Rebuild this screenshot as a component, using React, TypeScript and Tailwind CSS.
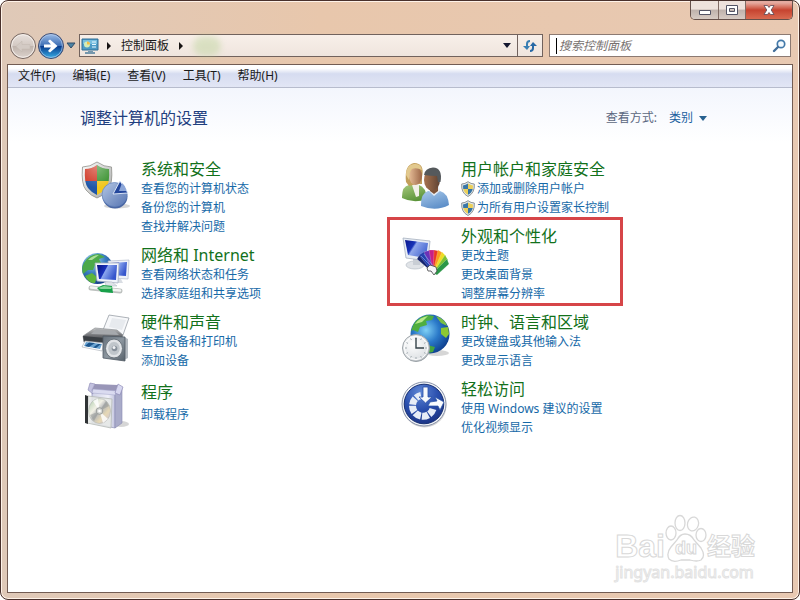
import { ReactNode } from "react";

type CategoryLink = { text: string; shield?: boolean };

type Category = {
  title: string;
  icon: ReactNode;
  links: CategoryLink[];
  highlighted?: boolean;
  spaced?: boolean;
};

const SecurityIcon = () => (
  <svg viewBox="0 0 50 50" className="size-[50px]">
    <defs>
      <clipPath id="sec-shield">
        <path d="M16 5Q11 9 4 9Q3 23 7 28Q11 33 16 35Q21 33 25 28Q29 23 28 9Q21 9 16 5Z" />
      </clipPath>
      <linearGradient id="sec-rim" x1="0" y1="0" x2="1" y2="1">
        <stop offset="0" stopColor="#fff" />
        <stop offset="1" stopColor="#a3a5a3" />
      </linearGradient>
      <linearGradient id="sec-pie" x1="0" y1="0" x2="1" y2="1">
        <stop offset="0" stopColor="#b4c7e4" />
        <stop offset="1" stopColor="#5674b2" />
      </linearGradient>
      <radialGradient id="sec-gloss" cx="0.5" cy="0.1" r="0.6">
        <stop offset="0" stopColor="#fff" stopOpacity="0.4" />
        <stop offset="1" stopColor="#fff" stopOpacity="0" />
      </radialGradient>
    </defs>
    <path d="M16 2Q9 7 1.5 7Q0 24 5 30Q10 36 16 38Q22 36 27 30Q32 24 30.5 7Q23 7 16 2Z" fill="url(#sec-rim)" stroke="#8f8f8a" strokeWidth="0.8" />
    <g clipPath="url(#sec-shield)">
      <path d="M0 0H16V21H0Z" fill="#d13a27" />
      <path d="M16 0H32V21H16Z" fill="#3a9230" />
      <path d="M0 21H16V40H0Z" fill="#1f57a8" />
      <path d="M16 21H32V40H16Z" fill="#f1c71e" />
      <path d="M0 0H32V40H0Z" fill="url(#sec-gloss)" />
    </g>
    <ellipse cx="36" cy="46" rx="13" ry="2.5" fill="#777" opacity="0.3" />
    <ellipse cx="34" cy="36.5" rx="12.5" ry="12" fill="#4a67a4" />
    <ellipse cx="33.5" cy="34.5" rx="12.5" ry="12" fill="url(#sec-pie)" stroke="#6484bb" strokeWidth="0.7" />
    <path d="M32 34L39 21L47 33Z" fill="#24479c" stroke="#e4edfa" strokeWidth="0.9" />
    <path d="M38 31L41 23Q45 26 45 31Z" fill="#8ca6d8" />
  </svg>
);

const NetworkIcon = () => (
  <svg viewBox="0 0 50 50" className="size-[50px]">
    <defs>
      <radialGradient id="net-globe" cx="0.35" cy="0.25" r="0.8">
        <stop offset="0" stopColor="#a9ddf3" />
        <stop offset="0.5" stopColor="#3a7ec0" />
        <stop offset="1" stopColor="#123b83" />
      </radialGradient>
      <linearGradient id="net-screen" x1="0" y1="0" x2="1" y2="0.4">
        <stop offset="0" stopColor="#08127c" />
        <stop offset="0.45" stopColor="#1a33bd" />
        <stop offset="0.5" stopColor="#8ba6ee" />
        <stop offset="1" stopColor="#3656cc" />
      </linearGradient>
    </defs>
    <circle cx="16.5" cy="22.5" r="15.5" fill="url(#net-globe)" />
    <path d="M3 17Q8 8 18 8L24 11L18 13L20 17L14 19L12 24L7 24L2 28Q0 22 3 17Z" fill="#4ca94a" />
    <path d="M4 30L11 27L16 31L14 37Q8 38 4 30Z" fill="#5eb53c" />
    <path d="M7 14Q12 9 18 9L11 14Z" fill="#c6ecac" opacity="0.8" />
    <path d="M27 15L48 14L47 33L30 32Z" fill="#eef1f8" stroke="#b3bccb" strokeWidth="0.7" />
    <path d="M29 17L46 16L45 30L30 29Z" fill="url(#net-screen)" />
    <path d="M34 33H40L42 37H35Z" fill="#d9dde3" />
    <path d="M14 17L38 17L37 37L16 35Z" fill="#f2f5fb" stroke="#a6b0c2" strokeWidth="0.8" />
    <path d="M16 19L36 19L35 34L18 33Z" fill="url(#net-screen)" />
    <path d="M24 36H31L36 40H25Z" fill="#dfe3e9" stroke="#aab2bf" strokeWidth="0.5" />
    <path d="M10 42L39 45" stroke="#bdc1bf" strokeWidth="5" strokeLinecap="round" />
    <path d="M10 41.5L39 44.5" stroke="#f3f5f3" strokeWidth="2.5" strokeLinecap="round" />
    <path d="M16 42L22 39L31 40L32 47L20 46Z" fill="#18a04a" />
    <path d="M17 42L23 40L31 41L30 43L20 43Z" fill="#86d79b" />
  </svg>
);

const HardwareIcon = () => (
  <svg viewBox="0 0 50 50" className="size-[50px]">
    <defs>
      <linearGradient id="hw-body" x1="0" y1="0" x2="0" y2="1">
        <stop offset="0" stopColor="#c9c9c9" />
        <stop offset="0.5" stopColor="#74767a" />
        <stop offset="1" stopColor="#3d4044" />
      </linearGradient>
      <linearGradient id="hw-speaker" x1="0" y1="0" x2="1" y2="1">
        <stop offset="0" stopColor="#66707a" />
        <stop offset="0.5" stopColor="#8c969f" />
        <stop offset="1" stopColor="#57616a" />
      </linearGradient>
    </defs>
    <path d="M28 2L48 5L42 22L22 17Z" fill="#f7f8fa" stroke="#999fa7" strokeWidth="0.8" />
    <path d="M31 5L45 7L41 17L28 14Z" fill="#e7eaee" />
    <path d="M14 15L36 17L42 22L40 29L3 29L2 23Z" fill="url(#hw-body)" stroke="#8c9095" strokeWidth="0.7" />
    <path d="M15 16L34 18L38 22L10 21Z" fill="#a6a9ad" />
    <path d="M2 23L24 25L23 31L3 29Z" fill="#3a3f44" />
    <path d="M4 28L23 30L21 38L1 34Z" fill="#fff" stroke="#a5abb3" strokeWidth="0.6" />
    <path d="M5 29L21 31L19 36L3 33Z" fill="#6ba4d2" />
    <path d="M8 29.5L14 30L8 34L4 33ZM17 31L20 31L15 35L12 34.5Z" fill="#1c568d" />
    <path d="M43 24L47 26L47 45L43 47Z" fill="#b4bac0" />
    <path d="M22 23L44 24L44 48L22 45Z" fill="url(#hw-speaker)" stroke="#515b65" strokeWidth="0.8" />
    <ellipse cx="33" cy="35.5" rx="8.5" ry="9.5" fill="#dfe2e5" stroke="#6c757d" />
    <ellipse cx="33" cy="35.5" rx="6.2" ry="7" fill="#c0c6cb" stroke="#eef0f2" strokeWidth="0.6" />
    <circle cx="33.5" cy="35.5" r="2.8" fill="#87909a" />
    <circle cx="33" cy="34.5" r="1.5" fill="#f1f3f5" />
  </svg>
);

const ProgramsIcon = () => (
  <svg viewBox="0 0 50 50" className="size-[50px]">
    <defs>
      <linearGradient id="pr-box" x1="0" y1="0" x2="1" y2="0">
        <stop offset="0" stopColor="#cfd1e6" />
        <stop offset="0.7" stopColor="#eff0f9" />
        <stop offset="1" stopColor="#c2c4de" />
      </linearGradient>
      <linearGradient id="pr-disc" x1="0" y1="0" x2="1" y2="1">
        <stop offset="0" stopColor="#a9cba9" />
        <stop offset="0.35" stopColor="#f2f1e6" />
        <stop offset="0.5" stopColor="#b6b8ba" />
        <stop offset="0.7" stopColor="#e6d8b5" />
        <stop offset="1" stopColor="#c7c0dc" />
      </linearGradient>
    </defs>
    <ellipse cx="40" cy="44" rx="8" ry="3" fill="#777" opacity="0.3" />
    <path d="M11 10L34 11L34 48L11 43Z" fill="url(#pr-box)" stroke="#9a9cbf" strokeWidth="0.8" />
    <path d="M34 11L41 7L41 43L34 48Z" fill="#a9abc9" stroke="#8a8cb2" strokeWidth="0.6" />
    <path d="M14 4L37 5L34 12L11 10Z" fill="#9996b8" />
    <path d="M14 4L9 3L7 10L12 14L11 10Z" fill="#c3c2e0" stroke="#8683b0" strokeWidth="0.6" />
    <path d="M12 9L36 11L34 15L11 13Z" fill="#dadbf0" stroke="#a3a4c9" strokeWidth="0.5" />
    <path d="M37 4L42 7L39 15L34 13Z" fill="#d6d6ef" stroke="#8683b0" strokeWidth="0.6" />
    <path d="M7 16L31 19L30 48L6 43Z" fill="#e5e8e5" fillOpacity="0.85" stroke="#b4b9b5" strokeWidth="0.8" />
    <path d="M4 15L7 16L7 44L4 43Z" fill="#303335" />
    <ellipse cx="18.5" cy="31" rx="11" ry="12.5" fill="url(#pr-disc)" stroke="#b2b5b1" strokeWidth="0.6" />
    <path d="M18.5 31L12 21L17 18.5ZM18.5 31L27 39L22 43Z" fill="#fff" opacity="0.8" />
    <path d="M18.5 31L25 21L28 26ZM18.5 31L9 35L13 41Z" fill="#8a8e8c" opacity="0.45" />
    <circle cx="18.5" cy="31" r="3.3" fill="#d6d8d5" stroke="#9b9f9d" />
    <circle cx="18.5" cy="31" r="1.3" fill="#fff" />
  </svg>
);

const UsersIcon = () => (
  <svg viewBox="0 0 50 50" className="size-[50px]">
    <defs>
      <linearGradient id="us-green" x1="0" y1="0" x2="0.5" y2="1">
        <stop offset="0" stopColor="#a8c97d" />
        <stop offset="1" stopColor="#5b943a" />
      </linearGradient>
      <linearGradient id="us-blue" x1="0" y1="0" x2="0.5" y2="1">
        <stop offset="0" stopColor="#a9c9ea" />
        <stop offset="1" stopColor="#5f90c9" />
      </linearGradient>
      <linearGradient id="us-tan" x1="0" y1="0" x2="1" y2="0">
        <stop offset="0" stopColor="#e5bc96" />
        <stop offset="1" stopColor="#9c6647" />
      </linearGradient>
      <linearGradient id="us-brown" x1="0" y1="0" x2="1" y2="0">
        <stop offset="0" stopColor="#a8734f" />
        <stop offset="1" stopColor="#5e4233" />
      </linearGradient>
    </defs>
    <path d="M1 37Q1 26 8 25L18 25Q25 27 26 39Q13 44 1 38Z" fill="url(#us-green)" />
    <path d="M11 25L15 37L18 36L18 22H11Z" fill="#f1efe9" />
    <path d="M5 22Q3 5 13 3Q24 3 21 17V24H16L8 26Z" fill="#c39f5b" />
    <ellipse cx="14.5" cy="16" rx="6.5" ry="9" fill="url(#us-tan)" />
    <path d="M5 15Q5 5 13 4Q20 3 21 10Q15 7 11 9Q8 12 8 20Z" fill="#e2c98e" />
    <path d="M20 45Q20 33 27 31H39Q47 33 48 45Q35 52 20 46Z" fill="url(#us-blue)" />
    <path d="M28 31L33 36L39 31L38 26H29Z" fill="#e9eef4" />
    <path d="M29 25H37V31L33 34L29 31Z" fill="#7d5339" />
    <ellipse cx="31" cy="20" rx="8" ry="10.5" fill="url(#us-brown)" />
    <path d="M23 15Q24 8 32 7.5Q42 8 39.5 22L37 22L36 16Q30 16 23 15Z" fill="#55595c" />
  </svg>
);

const AppearanceIcon = () => (
  <svg viewBox="0 0 50 50" className="size-[50px]">
    <defs>
      <linearGradient id="ap-screen" x1="0" y1="0" x2="1" y2="0.5">
        <stop offset="0" stopColor="#0c168c" />
        <stop offset="0.4" stopColor="#1733b8" />
        <stop offset="0.48" stopColor="#8fa6ea" />
        <stop offset="1" stopColor="#4a6bd4" />
      </linearGradient>
    </defs>
    <ellipse cx="14" cy="38" rx="9" ry="4" fill="#e0e3e7" stroke="#b6bdc5" strokeWidth="0.7" />
    <path d="M12 30H19V38H12Z" fill="#c9ced5" />
    <path d="M2 11L29 14L27 34L5 31Z" fill="#e8edf5" stroke="#a7b1bf" strokeWidth="0.8" />
    <path d="M4 13L27 16L25 31L7 28Z" fill="url(#ap-screen)" />
    <g stroke="#fff" strokeWidth="0.2">
      <path d="M32 46L16 32L19 27L34 42Z" fill="#152470" />
      <path d="M32 46L18 28L24 24L35 42Z" fill="#2440ae" />
      <path d="M32 46L23 25L29 23L36 43Z" fill="#6a32b8" />
      <path d="M32 46L28 23L34 23L36 43Z" fill="#c81f86" />
      <path d="M32 46L33 23L38 24L36 43Z" fill="#ea3524" />
      <path d="M32 46L37 23L42 26L37 44Z" fill="#fa9c1b" />
      <path d="M32 46L41 25L45 29L38 45Z" fill="#eedd22" />
      <path d="M32 46L44 28L47 33L37 46Z" fill="#7cc232" />
      <path d="M32 46L46 32L48 37L36 48Z" fill="#2b9748" />
    </g>
    <path d="M20 29L32 41M23 27L33 40" stroke="#7fa2e6" strokeWidth="0.7" />
    <path d="M26 41L29 38L35 40L36 44L33 48L30 44L27 44Z" fill="#f6f6f8" stroke="#444" strokeWidth="0.8" />
  </svg>
);

const ClockIcon = () => (
  <svg viewBox="0 0 50 50" className="size-[50px]">
    <defs>
      <radialGradient id="ck-globe" cx="0.4" cy="0.4" r="0.65">
        <stop offset="0" stopColor="#7fd0f5" />
        <stop offset="0.5" stopColor="#2b7ac9" />
        <stop offset="1" stopColor="#0d3d8c" />
      </radialGradient>
      <radialGradient id="ck-face" cx="0.4" cy="0.35" r="0.7">
        <stop offset="0" stopColor="#fff" />
        <stop offset="0.8" stopColor="#e0e3e6" />
        <stop offset="1" stopColor="#aab0b5" />
      </radialGradient>
    </defs>
    <ellipse cx="36" cy="40" rx="12" ry="3" fill="#777" opacity="0.3" />
    <circle cx="29" cy="21" r="19.5" fill="url(#ck-globe)" />
    <path d="M10 18Q13 5 26 2L33 3L31 7L25 8L26 12L19 14L17 19L12 17Z" fill="#4fae3f" />
    <path d="M35 3Q44 6 46 13L40 10L37 6Z" fill="#79c043" />
    <path d="M40 15L47 14L48 21L45 25L40 21Z" fill="#8cc832" />
    <path d="M26 32L34 34L32 39L27 40Z" fill="#45a43e" />
    <path d="M14 11Q19 4 27 3L21 9Z" fill="#b9e98a" />
    <circle cx="15" cy="35" r="13.5" fill="url(#ck-face)" stroke="#9ba2a7" />
    <circle cx="15" cy="35" r="11.5" fill="none" stroke="#fff" />
    <path d="M15 24V26M15 44V46M4 35H6M24 35H26M9.5 25.5L10.5 27M20.5 25.5L19.5 27M9.5 44.5L10.5 43M20.5 44.5L19.5 43M5.5 29.5L7 30.5M24.5 29.5L23 30.5M5.5 40.5L7 39.5M24.5 40.5L23 39.5" stroke="#a3acb1" />
    <path d="M15 25V35H23" fill="none" stroke="#36434a" strokeWidth="1.4" />
  </svg>
);

const EaseIcon = () => (
  <svg viewBox="0 0 50 50" className="size-[50px]">
    <defs>
      <radialGradient id="es-disc" cx="0.4" cy="0.2" r="0.9">
        <stop offset="0" stopColor="#5f86d4" />
        <stop offset="0.5" stopColor="#2a4fae" />
        <stop offset="1" stopColor="#172d7c" />
      </radialGradient>
    </defs>
    <circle cx="23.5" cy="25.5" r="22" fill="#999" opacity="0.4" />
    <circle cx="23" cy="24" r="22" fill="#f3f5f8" stroke="#8690a8" />
    <circle cx="23" cy="24" r="19.8" fill="url(#es-disc)" stroke="#152e72" />
    <path d="M32 29A10.5 10.5 0 1 1 20 15.5" fill="none" stroke="#e6ecf7" strokeWidth="7" strokeDasharray="6.5 1.2" />
    <path d="M22 7H27V17H31L24.5 23L18 17H22Z" fill="#f7f9fc" stroke="#2a50aa" strokeWidth="0.8" />
    <path d="M27 26L29 22L36 21L34 17L43 22L39 30L37 26Z" fill="#fafcff" stroke="#2751a4" strokeWidth="0.7" />
  </svg>
);

const ShieldIcon = () => (
  <svg viewBox="0 0 16 16" className="size-4 shrink-0" aria-hidden="true">
    <path d="M7 0.7Q4 3 0.7 3Q0 12 7 15.5Q14 12 13.3 3Q10 3 7 0.7Z" fill="#e3e8ea" stroke="#81888b" strokeWidth="0.9" />
    <path d="M7 2.5Q4.5 4.3 2 4.4L2.2 8H7Z" fill="#3977a8" />
    <path d="M7 2.5Q9.5 4.3 12 4.4L11.8 8H7Z" fill="#ecd05a" />
    <path d="M2.2 8H7V13.8Q3.2 12 2.2 8Z" fill="#ecd05a" />
    <path d="M7 8H11.8Q10.8 12 7 13.8Z" fill="#3573a4" />
  </svg>
);

const leftColumn: Category[] = [
  {
    title: "系统和安全",
    icon: <SecurityIcon />,
    links: [{ text: "查看您的计算机状态" }, { text: "备份您的计算机" }, { text: "查找并解决问题" }],
  },
  {
    title: "网络和 Internet",
    icon: <NetworkIcon />,
    links: [{ text: "查看网络状态和任务" }, { text: "选择家庭组和共享选项" }],
  },
  {
    title: "硬件和声音",
    icon: <HardwareIcon />,
    links: [{ text: "查看设备和打印机" }, { text: "添加设备" }],
  },
  { title: "程序", icon: <ProgramsIcon />, links: [{ text: "卸载程序" }], spaced: true },
];

const rightColumn: Category[] = [
  {
    title: "用户帐户和家庭安全",
    icon: <UsersIcon />,
    links: [
      { text: "添加或删除用户帐户", shield: true },
      { text: "为所有用户设置家长控制", shield: true },
    ],
  },
  {
    title: "外观和个性化",
    icon: <AppearanceIcon />,
    links: [{ text: "更改主题" }, { text: "更改桌面背景" }, { text: "调整屏幕分辨率" }],
    highlighted: true,
  },
  {
    title: "时钟、语言和区域",
    icon: <ClockIcon />,
    links: [{ text: "更改键盘或其他输入法" }, { text: "更改显示语言" }],
  },
  {
    title: "轻松访问",
    icon: <EaseIcon />,
    links: [{ text: "使用 Windows 建议的设置" }, { text: "优化视频显示" }],
  },
];

const menus = ["文件(F)", "编辑(E)", "查看(V)", "工具(T)", "帮助(H)"];

function CategoryBlock({ category }: { category: Category }) {
  return (
    <section className="relative flex items-start">
      <div className="-mb-4 w-[60px] shrink-0">{category.icon}</div>
      <div className={category.spaced ? "flex flex-col gap-[3px] pt-[3px]" : "flex flex-col"}>
        <h2 className="text-base leading-[19px] text-[#12711b]">
          <a href="#">{category.title}</a>
        </h2>
        <ul>
          {category.links.map((link) => (
            <li key={link.text} className="h-[19px]">
              <a href="#" className="flex items-center text-xs leading-[19px] text-[#1669a8]">
                {link.shield && <ShieldIcon />}
                {link.text}
              </a>
            </li>
          ))}
        </ul>
      </div>
      {category.highlighted && (
        <div className="pointer-events-none absolute -top-2.5 -left-3.5 h-[89px] w-[236px] border-3 border-[#d64548]" />
      )}
    </section>
  );
}

function WindowButtons() {
  return (
    <div className="flex h-[19px] self-end overflow-hidden rounded-b-[5px] border border-t-0 border-[#65504a]">
      <button aria-label="最小化" className="flex w-7 items-center justify-center border-r border-[#806b64] bg-linear-to-b from-[#eee2dc] from-45% via-[#bfb2ac] via-50% to-[#d7cbc4]">
        <svg viewBox="0 0 14 12" className="h-3 w-3.5">
          <path d="M1.5 6.5H12.5V10.5H1.5Z" fill="#fff" stroke="#535465" />
        </svg>
      </button>
      <button aria-label="最大化" className="flex w-[27px] items-center justify-center border-r border-[#806b64] bg-linear-to-b from-[#eee2dc] from-45% via-[#bfb2ac] via-50% to-[#d7cbc4]">
        <svg viewBox="0 0 14 12" className="h-3 w-3.5">
          <path d="M1.5 1.5H12.5V10.5H1.5ZM4.5 4.5V7.5H9.5V4.5Z" fill="#fff" fillRule="evenodd" stroke="#535465" />
        </svg>
      </button>
      <button aria-label="关闭" className="flex w-[46px] items-center justify-center bg-linear-to-b from-[#e5aaa0] from-10% via-[#c64330] via-50% to-[#d96a50]">
        <svg viewBox="0 0 14 12" className="h-3 w-3.5">
          <path d="M2 1.5H5.5L7 3.5L8.5 1.5H12L9.2 6L12 10.5H8.5L7 8.5L5.5 10.5H2L4.8 6Z" fill="#fff" stroke="#5b4754" strokeWidth="0.8" />
        </svg>
      </button>
    </div>
  );
}

function NavButtons() {
  return (
    <div className="flex w-[72px] shrink-0 items-center">
      <button aria-label="后退" className="ml-0.5">
        <svg viewBox="0 0 28 28" className="size-7">
          <defs>
            <linearGradient id="nav-back" x1="0" y1="0" x2="0" y2="1">
              <stop offset="0" stopColor="#e9e2de" />
              <stop offset="0.48" stopColor="#d3c9c3" />
              <stop offset="0.52" stopColor="#c0b4ad" />
              <stop offset="1" stopColor="#ddd4ce" />
            </linearGradient>
          </defs>
          <circle cx="14" cy="14" r="12.5" fill="url(#nav-back)" stroke="#75655f" />
          <circle cx="14" cy="14" r="11.3" fill="none" stroke="#f5efeb" />
          <path d="M7 14.5L13 9V12.5H21V17H13V20Z" fill="#d3cac4" stroke="#c3b8b1" strokeWidth="0.5" />
        </svg>
      </button>
      <button aria-label="前进">
        <svg viewBox="0 0 28 28" className="size-7">
          <defs>
            <linearGradient id="nav-next" x1="0" y1="0" x2="0" y2="1">
              <stop offset="0" stopColor="#9fbee8" />
              <stop offset="0.48" stopColor="#3e6fb5" />
              <stop offset="0.52" stopColor="#0a3d8e" />
              <stop offset="1" stopColor="#39b1e8" />
            </linearGradient>
          </defs>
          <circle cx="14" cy="14" r="12.5" fill="url(#nav-next)" stroke="#3e4b70" />
          <circle cx="14" cy="14" r="11.4" fill="none" stroke="#b4cced" strokeWidth="0.7" />
          <path d="M7 12.5H14L11 9L13 7.5L20.5 14L13 20.5L11 19L14 15.5H7Z" fill="#fff" />
        </svg>
      </button>
      <button aria-label="最近浏览的位置" className="ml-px">
        <svg viewBox="0 0 10 7" className="h-[7px] w-2.5">
          <path d="M1 1H9L5 6Z" fill="#4a83a5" stroke="#334d67" />
        </svg>
      </button>
    </div>
  );
}

function AddressBar() {
  return (
    <div className="flex h-[23px] min-w-0 flex-1 items-center border border-[#71625d] bg-linear-to-b from-[#f8efe9] to-[#efe5de]">
      <svg viewBox="0 0 18 18" className="ml-px size-[18px] shrink-0">
        <path d="M1 2H17V13H1Z" fill="#4d9bc6" stroke="#336f95" />
        <path d="M2 3H16V7H2Z" fill="#77bedf" />
        <circle cx="6" cy="7.5" r="3" fill="#d2ecb9" />
        <path d="M6 7.5V4.5A3 3 0 0 1 9 7.5Z" fill="#f5bd43" />
        <path d="M11 5H15M11 7.5H15M11 10H15" stroke="#e6f8ff" />
        <path d="M7 14H12V15H14V17H4V15H7Z" fill="#7597ad" />
      </svg>
      <svg viewBox="0 0 4 8" className="ml-2 h-2 w-1">
        <path d="M0 0L4 4L0 8Z" fill="#171313" />
      </svg>
      <button className="ml-2.5 text-xs leading-5 text-[#171717]">控制面板</button>
      <svg viewBox="0 0 4 8" className="ml-2.5 h-2 w-1">
        <path d="M0 0L4 4L0 8Z" fill="#171313" />
      </svg>
      <span className="ml-2.5 h-5 w-7 rounded-full bg-[#b3d08f] opacity-40 blur-[3px]" />
      <button aria-label="上一个位置" className="ml-auto flex h-full w-5 items-center justify-center">
        <svg viewBox="0 0 8 5" className="h-[5px] w-2">
          <path d="M0 0H8L4 5Z" fill="#14162e" />
        </svg>
      </button>
      <button aria-label="刷新" className="flex h-full w-[25px] items-center justify-center border-l border-[#71625d]">
        <svg viewBox="0 0 16 16" className="size-4">
          <path d="M8 2Q4 2 4 6V8H1L5 12L8 8H6V6Q6 4 8 4Z" fill="#397eb3" />
          <path d="M8 14Q12 14 12 10V8H15L11 4L8 8H10V10Q10 12 8 12Z" fill="#2869a5" />
        </svg>
      </button>
    </div>
  );
}

function Watermark() {
  return (
    <div className="mt-auto mr-[37px] mb-2.5 self-end font-['Noto_Sans','Noto_Sans_CJK_SC',sans-serif] text-white" aria-hidden="true">
      <div className="flex h-12 items-end">
        <span className="font-['Liberation_Sans',sans-serif] text-[32px] leading-8 font-bold [-webkit-text-stroke:1px_#d8d8d8]">Bai</span>
        <div className="relative flex h-12 w-[42px] items-end justify-center">
          <svg viewBox="0 0 42 48" className="absolute inset-0 h-12 w-[42px]">
            <g fill="#fff" stroke="#d8d8d8" strokeWidth="1.3">
              <ellipse cx="6" cy="19" rx="5" ry="7" />
              <ellipse cx="15" cy="9" rx="5" ry="7.5" />
              <ellipse cx="28" cy="10" rx="5.5" ry="7" transform="rotate(15 28 10)" />
              <ellipse cx="36" cy="21" rx="5" ry="6.5" />
              <path d="M20 20Q26 20 29 26L36 34Q41 42 36 46Q32 48 25 46H16Q8 49 4 45Q1 39 6 33L12 26Q15 20 20 20Z" />
            </g>
          </svg>
          <span className="relative mb-1 font-['Liberation_Sans',sans-serif] text-lg leading-5 font-bold [-webkit-text-stroke:1px_#d8d8d8]">du</span>
        </div>
        <span className="text-2xl leading-8 font-bold [-webkit-text-stroke:1px_#d8d8d8]">经验</span>
      </div>
      <div className="text-base leading-5 [-webkit-text-stroke:1px_#e2e2e2]">jingyan.baidu.com</div>
    </div>
  );
}

export default function App() {
  return (
    <div className="flex min-h-screen flex-col rounded-lg border border-[#49312c] bg-linear-to-r from-[#dfc9b8] via-[#e8c7ac] via-40% to-[#e8c9b2] px-1.5 pb-1.5 font-['Noto_Sans','Noto_Sans_CJK_SC',sans-serif] text-[#1a1a1a] shadow-[inset_0_0_0_1px_#fff3e9]">
      <WindowButtons />
      <header className="flex items-center pt-3.5 pb-[7px]">
        <div className="-my-1 flex min-w-0 flex-1 items-center">
          <NavButtons />
          <AddressBar />
        </div>
        <label className="mr-0.5 ml-1.5 flex h-[23px] w-[242px] items-center border border-[#8c7a72] bg-white pr-1">
          <span className="ml-1.5 h-4 w-px bg-black" />
          <input
            type="text"
            aria-label="搜索控制面板"
            placeholder="搜索控制面板"
            className="ml-0.5 min-w-0 flex-1 text-xs italic outline-none placeholder:text-[#77716f]"
          />
          <svg viewBox="0 0 14 14" className="size-3.5">
            <circle cx="9" cy="5" r="3.7" fill="#f4faff" stroke="#4379a9" strokeWidth="1.7" />
            <path d="M6 8L2 12" stroke="#426e99" strokeWidth="2.4" strokeLinecap="round" />
          </svg>
        </label>
      </header>
      <div className="flex flex-1 flex-col border border-[#725c53] bg-white">
        <nav className="flex h-[23px] items-center gap-[17px] border-b border-[#b7bccd] bg-linear-to-b from-white from-15% via-[#d6dcf0] via-40% to-[#e2e6f5] px-2.5">
          {menus.map((menu) => (
            <button key={menu} className="text-xs leading-5">
              {menu}
            </button>
          ))}
        </nav>
        <main className="flex flex-1 flex-col bg-[linear-gradient(to_bottom,#f3f6fd,#ffffff_55px)]">
          <div className="flex items-center justify-between pt-[18px] pr-[85px] pl-[72px]">
            <h1 className="text-base leading-6 text-[#1f3f7f]">调整计算机的设置</h1>
            <div className="flex items-center gap-3 text-xs leading-5">
              <span className="text-[#5b6780]">查看方式:</span>
              <button className="flex items-center gap-1.5 text-[#1b5f9f]">
                类别
                <svg viewBox="0 0 8 5" className="h-[5px] w-2">
                  <path d="M0 0H8L4 5Z" fill="#28618f" />
                </svg>
              </button>
            </div>
          </div>
          <div className="flex pt-[30px] pl-[73px]">
            {[leftColumn, rightColumn].map((column, index) => (
              <div key={index} className="flex w-80 flex-col gap-2.5">
                {column.map((category) => (
                  <CategoryBlock key={category.title} category={category} />
                ))}
              </div>
            ))}
          </div>
          <Watermark />
        </main>
      </div>
    </div>
  );
}
